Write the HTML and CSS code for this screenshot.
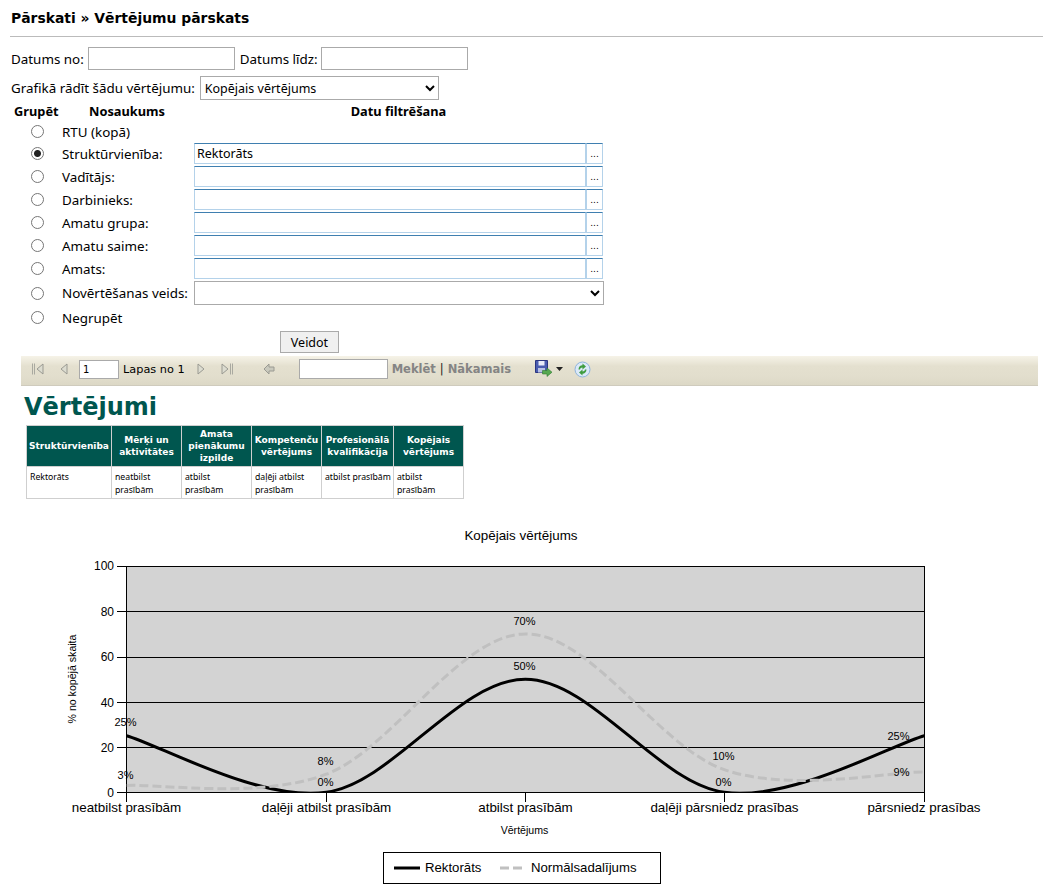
FILE: index.html
```html
<!DOCTYPE html>
<html lang="lv">
<head>
    <meta charset="UTF-8">
    <title>Vērtējumu pārskats</title>
    <link rel="stylesheet" href="styles.css">
</head>
<body>
    <h1 class="page-title">Pārskati » Vērtējumu pārskats</h1>

    <form class="filters">
        <div class="date-row">
            <label>Datums no:</label>
            <input type="text" class="date-input">
            <label class="date-to">Datums līdz:</label>
            <input type="text" class="date-input">
        </div>
        <div class="rating-row">
            <label>Grafikā rādīt šādu vērtējumu:</label>
            <select class="rating-select">
                <option>Kopējais vērtējums</option>
            </select>
        </div>

        <table class="group-table">
            <tr class="group-head">
                <th class="col-radio">Grupēt</th>
                <th class="col-name">Nosaukums</th>
                <th class="col-filter">Datu filtrēšana</th>
            </tr>
            <tr class="row-first">
                <td class="radio-cell"><input type="radio" name="group"></td>
                <td colspan="2">RTU (kopā)</td>
            </tr>
            <tr>
                <td class="radio-cell"><input type="radio" name="group" checked></td>
                <td>Struktūrvienība:</td>
                <td><div class="lookup"><input type="text" value="Rektorāts"><button type="button">...</button></div></td>
            </tr>
            <tr>
                <td class="radio-cell"><input type="radio" name="group"></td>
                <td>Vadītājs:</td>
                <td><div class="lookup"><input type="text"><button type="button">...</button></div></td>
            </tr>
            <tr>
                <td class="radio-cell"><input type="radio" name="group"></td>
                <td>Darbinieks:</td>
                <td><div class="lookup"><input type="text"><button type="button">...</button></div></td>
            </tr>
            <tr>
                <td class="radio-cell"><input type="radio" name="group"></td>
                <td>Amatu grupa:</td>
                <td><div class="lookup"><input type="text"><button type="button">...</button></div></td>
            </tr>
            <tr>
                <td class="radio-cell"><input type="radio" name="group"></td>
                <td>Amatu saime:</td>
                <td><div class="lookup"><input type="text"><button type="button">...</button></div></td>
            </tr>
            <tr>
                <td class="radio-cell"><input type="radio" name="group"></td>
                <td>Amats:</td>
                <td><div class="lookup"><input type="text"><button type="button">...</button></div></td>
            </tr>
            <tr class="row-kind">
                <td class="radio-cell"><input type="radio" name="group"></td>
                <td>Novērtēšanas veids:</td>
                <td><select class="kind-select"><option></option></select></td>
            </tr>
            <tr>
                <td class="radio-cell"><input type="radio" name="group"></td>
                <td colspan="2">Negrupēt</td>
            </tr>
        </table>

        <div class="submit-row">
            <button type="submit" class="submit-btn">Veidot</button>
        </div>
    </form>

    <div class="report-toolbar">
        <div class="pager">
            <svg class="tool-icon" width="14" height="14" viewBox="0 0 14 14"><path d="M1.500 1.500v11M3.500 1.500v11" fill="none" stroke="#a9a9a0"/><path d="M12 2v10L6 7z" fill="#dcdcd0" stroke="#9a9a92"/></svg>
            <svg class="tool-icon gap-first" width="14" height="14" viewBox="0 0 14 14"><path d="M10 2v10L4 7z" fill="#dcdcd0" stroke="#9a9a92"/></svg>
            <input type="text" class="page-input" value="1">
            <span class="page-text">Lapas no 1</span>
            <svg class="tool-icon gap-next" width="14" height="14" viewBox="0 0 14 14"><path d="M4 2v10l6-5z" fill="#dcdcd0" stroke="#9a9a92"/></svg>
            <svg class="tool-icon gap-last" width="14" height="14" viewBox="0 0 14 14"><path d="M2 2v10l6-5z" fill="#dcdcd0" stroke="#9a9a92"/><path d="M10.500 1.500v11M12.500 1.500v11" fill="none" stroke="#a9a9a0"/></svg>
            <svg class="tool-icon gap-back" width="14" height="14" viewBox="0 0 14 14"><path d="M2 7l5-5v3h5v4H7v3z" fill="#c9c9bd" stroke="#9a9a92"/></svg>
        </div>
        <input type="text" class="find-input">
        <span class="find-links"><span>Meklēt</span> <i>|</i> <span>Nākamais</span></span>
        <svg class="save-icon" width="18" height="18" viewBox="0 0 18 18">
            <path d="M.5.500h12v12H.5z" fill="#4a5cb0" stroke="#2a3580"/>
            <path d="M3.500 1h6v4.500h-6z" fill="#e9ecf8"/>
            <path d="M3 8h7v4.500H3z" fill="#b9c2e4"/>
            <path d="M7.500 10.500h4.500V8l5 4.200-5 4.300v-2.500H7.500z" fill="#56a850" stroke="#2f7a30" stroke-width=".6"/>
        </svg>
        <svg class="menu-caret" width="7" height="4" viewBox="0 0 7 4"><path d="M0 0h7L3.500 4z" fill="#222"/></svg>
        <svg class="refresh-icon" width="17" height="17" viewBox="0 0 17 17">
            <circle cx="8.500" cy="8.500" r="7.500" fill="#dbe9f8" stroke="#8fb4dc"/>
            <path d="M4.500 8.500C4.500 5.800 6.300 4.300 8.500 4.300V2.500l3.500 3-3.500 3V6.500C7 6.500 6.200 7.300 6 8.500z" fill="#3f9c3f"/>
            <path d="M12.500 8.500c0 2.700-1.800 4.200-4 4.200v1.800l-3.500-3 3.500-3v2c1.500 0 2.300-.8 2.500-2z" fill="#3f9c3f"/>
        </svg>
    </div>

    <h2 class="report-title">Vērtējumi</h2>
    <table class="report-table">
        <tr>
            <th class="w-unit">Struktūrvienība</th>
            <th class="w-col">Mērķi un aktivitātes</th>
            <th class="w-col">Amata pienākumu izpilde</th>
            <th class="w-col">Kompetenču vērtējums</th>
            <th class="w-wide">Profesionālā kvalifikācija</th>
            <th class="w-col">Kopējais vērtējums</th>
        </tr>
        <tr>
            <td>Rektorāts</td>
            <td>neatbilst prasībām</td>
            <td>atbilst prasībām</td>
            <td>daļēji atbilst prasībām</td>
            <td>atbilst prasībām</td>
            <td>atbilst prasībām</td>
        </tr>
    </table>

    <svg class="chart" width="1043" height="374" viewBox="0 520 1043 374">
        <defs>
            <clipPath id="plot-clip"><rect x="126.500" y="566" width="798" height="226.500"/></clipPath>
        </defs>
        <text class="chart-title" x="521" y="540" text-anchor="middle">Kopējais vērtējums</text>

        <rect x="126.500" y="566.500" width="798" height="226" fill="#d3d3d3" stroke="#000"/>
        <path d="M117 566.500H924M117 611.500H924M117 657.500H924M117 702.500H924M117 747.500H924M117 792.500H924" stroke="#000" fill="none"/>
        <path d="M126.500 793v9M326.500 793v9M525.500 793v9M724.500 793v9M924.500 793v9" stroke="#000" fill="none"/>

        <g clip-path="url(#plot-clip)" fill="none" stroke-width="3">
            <path stroke="#000" d="M126.500 735.700C159.800 745.100 259.800 801.700 326.300 792.300C392.800 782.900 459.300 679.200 525.300 679.200C591.300 679.200 657.800 782.900 724.300 792.300C790.800 801.700 891 745.100 924.300 735.700"/>
            <path stroke="#c0c0c0" stroke-dasharray="9 4" d="M126.500 785.500C159.800 783.600 259.800 799.500 326.300 774.200C392.800 748.900 459 634.650 525.300 633.900C591.600 633.150 657.800 746.700 724.300 769.700C790.800 792.700 891 771.500 924.300 771.900"/>
        </g>

        <g class="axis-y" text-anchor="end">
            <text x="114" y="570">100</text>
            <text x="114" y="616">80</text>
            <text x="114" y="661">60</text>
            <text x="114" y="707">40</text>
            <text x="114" y="752">20</text>
            <text x="114" y="797">0</text>
        </g>
        <g class="axis-x" text-anchor="middle">
            <text x="126.500" y="812">neatbilst prasībām</text>
            <text x="326.500" y="812">daļēji atbilst prasībām</text>
            <text x="525.500" y="812">atbilst prasībām</text>
            <text x="724.500" y="812">daļēji pārsniedz prasības</text>
            <text x="924" y="812">pārsniedz prasības</text>
        </g>
        <g class="point-labels" text-anchor="middle">
            <text x="125.500" y="726">25%</text>
            <text x="325.500" y="765">8%</text>
            <text x="325.500" y="786">0%</text>
            <text x="524.500" y="625">70%</text>
            <text x="524.500" y="670">50%</text>
            <text x="723.500" y="760">10%</text>
            <text x="723.500" y="786">0%</text>
            <text x="898.500" y="740">25%</text>
            <text x="901.500" y="776">9%</text>
            <text x="125.500" y="779">3%</text>
        </g>
        <text class="axis-name" x="524.500" y="834" text-anchor="middle">Vērtējums</text>
        <text class="axis-name" transform="translate(75.500 679) rotate(-90)" text-anchor="middle">% no kopējā skaita</text>

        <rect x="383.500" y="852.500" width="277" height="31" fill="#fff" stroke="#000"/>
        <path d="M394 868h26" stroke="#000" stroke-width="3"/>
        <text class="legend-text" x="425" y="872">Rektorāts</text>
        <path d="M500 868h26" stroke="#c0c0c0" stroke-width="3" stroke-dasharray="9 4"/>
        <text class="legend-text" x="531" y="872">Normālsadalījums</text>
    </svg>
</body>
</html>
```

FILE: styles.css
```css
body {
    margin: 0;
    background-color: #fff;
    color: #000;
    font-family: "Noto Sans", Tahoma, sans-serif;
    font-size: 13.4px;
}

.page-title {
    margin: 0 0 0 10px;
    height: 37px;
    box-sizing: border-box;
    padding: 10px 0 0 1px;
    border-bottom: 1px solid #bbb;
    font-family: "DejaVu Sans", Verdana, sans-serif;
    font-size: 13.9px;
    line-height: 16px;
}

.filters {
    padding: 10px 0 0 11px;
}

.date-row {
    display: flex;
    align-items: center;
    height: 23px;
}

.date-row label {
    margin-right: 4px;
}

.date-row .date-to {
    margin-left: 5px;
    margin-right: 3px;
}

.date-input {
    width: 147px;
    height: 23px;
    box-sizing: border-box;
    border: 1px solid #aaa;
    padding: 1px 3px;
}

.rating-row {
    display: flex;
    align-items: center;
    margin-top: 6px;
    height: 24px;
}

.rating-row label {
    margin-right: 5px;
}

.rating-select {
    width: 239px;
    height: 24px;
    border: 1px solid #aaa;
    background-color: #fff;
    font: inherit;
    font-size: 12.500px;
}

.group-table {
    border-collapse: collapse;
    table-layout: fixed;
    width: 593px;
    margin-left: -1px;
}

.group-table th,
.group-table td {
    box-sizing: border-box;
    padding: 0;
}

.group-head th {
    height: 21px;
    font-size: 12.800px;
    font-weight: bold;
    text-align: left;
}

.group-table .col-radio {
    width: 52px;
    padding-left: 4px;
}

.group-table .col-name {
    width: 132px;
    padding-left: 27px;
}

.group-table .col-filter {
    width: 409px;
    text-align: center;
}

.group-table tr {
    height: 23px;
}

.group-table .group-head {
    height: 21px;
}

.group-table .row-first {
    height: 21px;
}

.group-table .row-kind {
    height: 26px;
}

.group-table .radio-cell {
    padding-left: 21px;
}

.radio-cell input {
    appearance: none;
    display: block;
    width: 13px;
    height: 13px;
    margin: 0;
    border: 1px solid #767676;
    border-radius: 50%;
    background-color: #fff;
}

.radio-cell input:checked {
    background: radial-gradient(circle, #222 0, #222 3px, #fff 4px);
}

.lookup {
    display: flex;
    height: 21px;
}

.lookup input,
.lookup button {
    box-sizing: border-box;
    height: 21px;
    background-color: #fff;
    border: 1px solid #b4d2ea;
    border-top-color: #3f7fb0;
    padding: 0;
}

.lookup input {
    width: 393px;
    padding-left: 2px;
    font: inherit;
    font-size: 12.500px;
}

.lookup button {
    width: 17px;
    margin-left: 0;
    font-size: 9px;
    font-family: "DejaVu Sans", sans-serif;
}

.kind-select {
    display: block;
    width: 410px;
    height: 24px;
    border: 1px solid #aaa;
    background-color: #fff;
}

.submit-row {
    margin-top: 2px;
    padding-left: 269px;
}

.submit-btn {
    display: block;
    width: 59px;
    height: 22px;
    border: 1px solid #aaa;
    background-color: #f0f0f0;
    font: inherit;
    font-size: 12.500px;
    padding: 0;
}

.report-toolbar {
    display: flex;
    align-items: center;
    height: 30px;
    margin: 3px 5px 0 21px;
    box-sizing: border-box;
    padding: 0 0 3px 10px;
    border-bottom: 1px solid #cfcbbd;
    background: linear-gradient(#f6f3e8 0, #e4e0cf 35%, #e2decd 70%, #dcd8c6 100%);
}

.pager {
    display: flex;
    align-items: center;
}

.tool-icon {
    display: block;
}

.gap-first {
    margin-left: 12px;
}

.page-input {
    width: 40px;
    height: 19px;
    box-sizing: border-box;
    margin-left: 8px;
    padding: 0 0 0 3px;
    border: 1px solid #aaa;
    font-family: "DejaVu Sans", sans-serif;
    font-size: 10px;
}

.page-text {
    margin-left: 4px;
    font-family: "DejaVu Sans", sans-serif;
    font-size: 11.300px;
}

.gap-next {
    margin-left: 9px;
}

.gap-last {
    margin-left: 12px;
}

.gap-back {
    margin-left: 28px;
}

.find-input {
    width: 89px;
    height: 20px;
    box-sizing: border-box;
    margin-left: 23px;
    border: 1px solid #aaa;
}

.find-links {
    margin-left: 4px;
    font-family: "DejaVu Sans", sans-serif;
    font-size: 11.500px;
    font-weight: bold;
    color: #848484;
}

.find-links i {
    font-style: normal;
    font-weight: normal;
    color: #222;
}

.save-icon {
    margin-left: 24px;
}

.menu-caret {
    margin-left: 3px;
}

.refresh-icon {
    margin-left: 11px;
}

.report-title {
    margin: 4px 0 0 24px;
    color: #00564f;
    font-family: "DejaVu Sans", Verdana, sans-serif;
    font-size: 24px;
    font-weight: bold;
    line-height: 35px;
    height: 35px;
}

.report-table {
    border-collapse: collapse;
    table-layout: fixed;
    width: 438px;
    margin-left: 26px;
    font-family: "Noto Sans", Tahoma, sans-serif;
    font-size: 8.700px;
}

.report-table th,
.report-table td {
    box-sizing: border-box;
    border: 1px solid #cfcfcf;
    padding: 0 2px;
}

.report-table th {
    height: 41px;
    background-color: #00564f;
    color: #fff;
    font-family: "DejaVu Sans", Verdana, sans-serif;
    font-size: 9px;
    font-weight: bold;
    line-height: 12px;
    text-align: center;
}

.report-table td {
    height: 32px;
    padding: 4px 2px 0 3px;
    vertical-align: top;
    line-height: 12.500px;
}

.w-unit {
    width: 85px;
}

.w-col {
    width: 70px;
}

.w-wide {
    width: 72px;
}

.chart {
    display: block;
    margin-top: 21px;
    font-family: "Liberation Sans", Arial, sans-serif;
}

.chart-title {
    font-size: 13.400px;
}

.axis-y text {
    font-size: 12px;
}

.axis-x text {
    font-size: 13.400px;
}

.point-labels text {
    font-size: 11px;
}

.axis-name {
    font-size: 10.600px;
}

.legend-text {
    font-size: 13.200px;
}
```
